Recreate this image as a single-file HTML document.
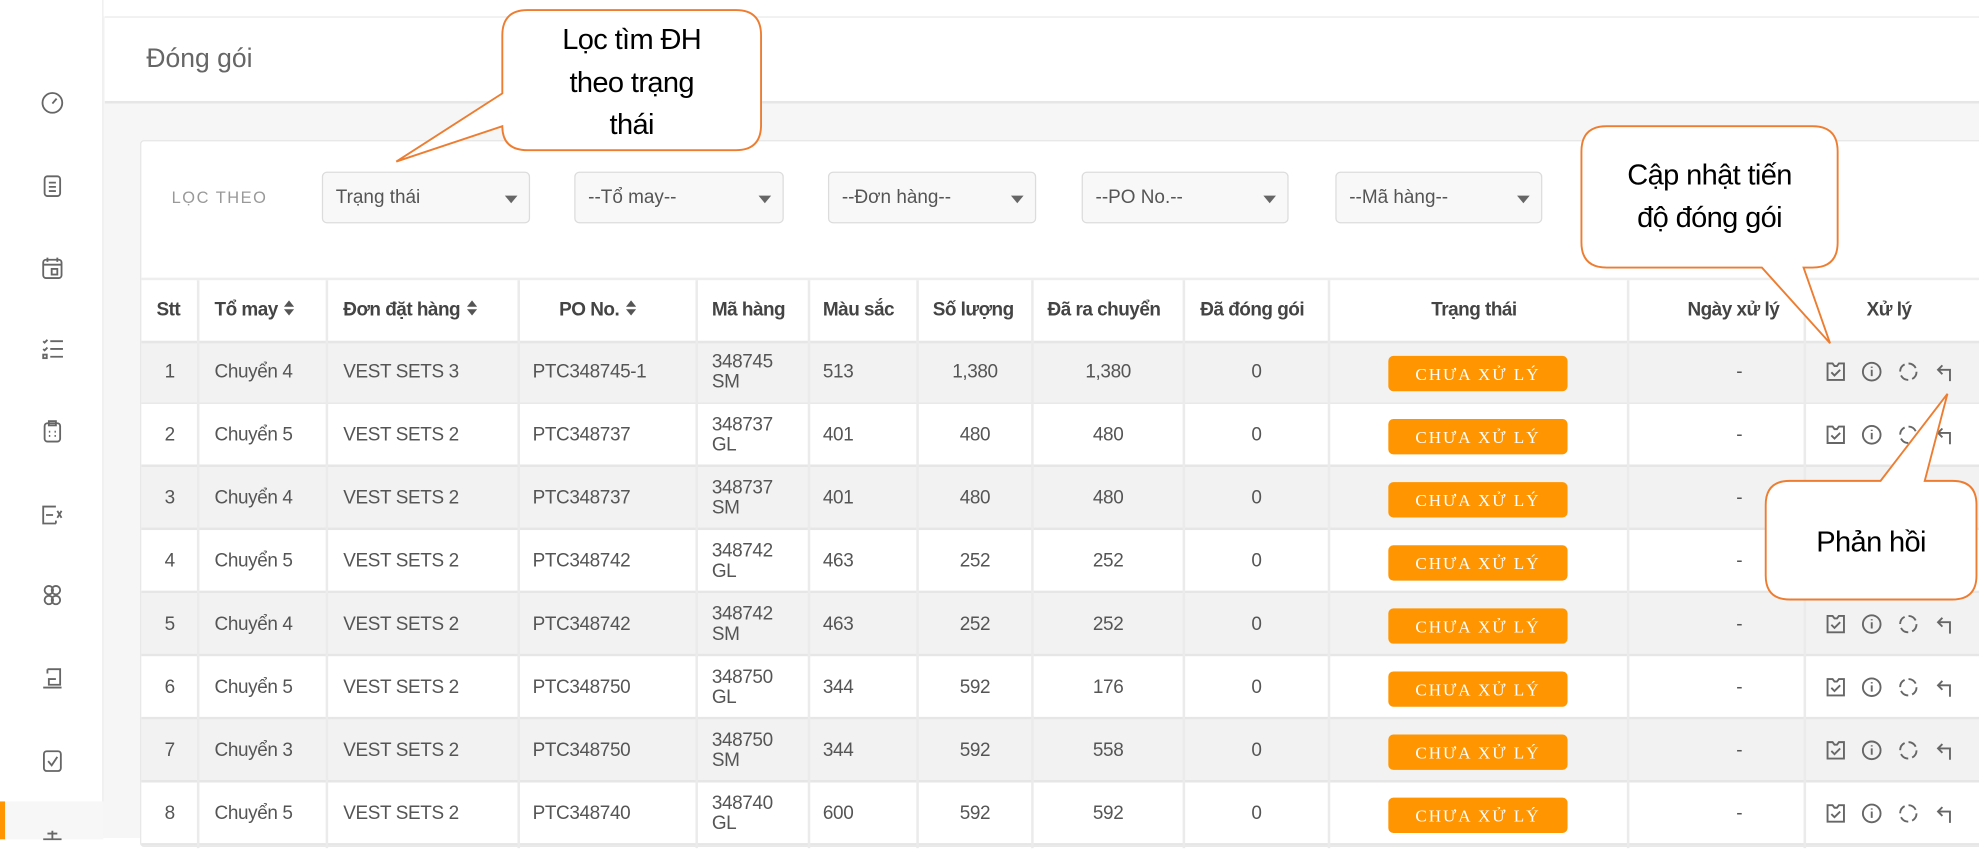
<!DOCTYPE html>
<html><head><meta charset="utf-8">
<style>
*{margin:0;padding:0;box-sizing:border-box}
html,body{width:1979px;height:838px;overflow:hidden;background:#fff}
#w{position:absolute;left:0;top:0;width:1568px;height:664px;transform:scale(1.26212);transform-origin:0 0;font-family:"Liberation Sans",sans-serif;color:#555;background:#f6f6f6}
.a{position:absolute}
.side{left:0;top:0;width:82px;height:664px;background:#fff;border-right:1px solid #ececec}
.ic{position:absolute;left:32px;width:19px;height:19px}
.hdr{left:83px;top:13px;width:1485px;height:69px;background:#fff;border-top:1px solid #eaeaea;border-bottom:2px solid #e6e6e6}
.card{left:111px;top:111px;width:1470px;height:560px;background:#fff;border:1px solid #e6e6e6;border-radius:3px}
.dd{position:absolute;top:136px;height:41px;background:#f8f8f8;border:1px solid #dcdcdc;border-radius:4px;font-size:15px;line-height:39px;padding-left:10px;color:#555}
.dd:after{content:"";position:absolute;right:9px;top:18px;border-left:5px solid transparent;border-right:5px solid transparent;border-top:6px solid #666}
.th{position:absolute;top:222px;height:47px;line-height:47px;font-size:15px;font-weight:bold;color:#444;letter-spacing:-0.4px}
.row{position:absolute;left:112px;width:1460px;height:50px;border-bottom:2px solid #e6e6e6}
.vl{position:absolute;top:222px;width:2px;height:450px;background:#ebebeb}
.c{position:absolute;font-size:15px;color:#555;line-height:50px;letter-spacing:-0.3px}
.m{line-height:16px;padding-top:9px}
.btn{position:absolute;width:142px;height:28px;background:#ff9500;border-radius:4px;color:#fff;font-family:"Liberation Serif","DejaVu Serif",serif;font-size:13.5px;letter-spacing:1.6px;text-align:center;line-height:29px}
.sort{display:inline-block;width:9px;height:13px;vertical-align:-1px;margin-left:5px;position:relative}
.sort:before{content:"";position:absolute;left:0;top:0;border-left:4.5px solid transparent;border-right:4.5px solid transparent;border-bottom:5px solid #555}
.sort:after{content:"";position:absolute;left:0;top:7px;border-left:4.5px solid transparent;border-right:4.5px solid transparent;border-top:5px solid #555}
.co{font-family:"Liberation Sans",sans-serif;font-size:23px;color:#000;text-align:center;line-height:33.5px;letter-spacing:-0.5px}
</style></head><body><div id="w">
<div class="a" style="left:82px;top:0;width:1486px;height:13px;background:#fff"></div>
<div class="a side">
<svg class="ic" style="top:72px" viewBox="0 0 17 17" fill="none" stroke="#666" stroke-width="1.3"><circle cx="8.5" cy="8.5" r="7"/><path d="M8.5 9 L11.5 5.5"/></svg>
<svg class="ic" style="top:138px" viewBox="0 0 17 17" fill="none" stroke="#666" stroke-width="1.3"><rect x="3" y="1.5" width="11" height="14" rx="2"/><path d="M6 6h5M6 9h5M6 12h5"/></svg>
<svg class="ic" style="top:203px" viewBox="0 0 17 17" fill="none" stroke="#666" stroke-width="1.3"><rect x="2" y="2.5" width="13" height="13" rx="2"/><path d="M2 6h13M5 1v3M12 1v3"/><rect x="8" y="9" width="4" height="4"/></svg>
<svg class="ic" style="top:267px" viewBox="0 0 17 17" fill="none" stroke="#666" stroke-width="1.3"><path d="M7 3h9M7 8.5h9M7 14h9M2 3l1 1 2-2M2 8.5l1 1 2-2"/><rect x="2" y="12.5" width="2.5" height="2.5"/></svg>
<svg class="ic" style="top:332px" viewBox="0 0 17 17" fill="none" stroke="#666" stroke-width="1.3"><rect x="3" y="3" width="11" height="13" rx="2"/><rect x="6" y="1.5" width="5" height="3"/><path d="M6 9h1M10 9h1M6 12h1M10 12h1"/></svg>
<svg class="ic" style="top:398px" viewBox="0 0 17 17" fill="none" stroke="#666" stroke-width="1.3"><path d="M11 3H2v12h9M11 13v2"/><path d="M4 9h5M12 6l3 5M15 6l-3 5"/></svg>
<svg class="ic" style="top:462px" viewBox="0 0 17 17" fill="none" stroke="#666" stroke-width="1.3"><circle cx="6" cy="5" r="3"/><circle cx="11" cy="5" r="3"/><circle cx="6" cy="12" r="3"/><circle cx="11" cy="12" r="3"/></svg>
<svg class="ic" style="top:528px" viewBox="0 0 17 17" fill="none" stroke="#666" stroke-width="1.3"><path d="M5 2h9v11H6V9h5M2 15h13M5 2v3"/></svg>
<svg class="ic" style="top:593px" viewBox="0 0 17 17" fill="none" stroke="#666" stroke-width="1.3"><rect x="2.5" y="2" width="12" height="14" rx="2"/><path d="M5.5 9l2.5 3 4-6"/></svg>
<div class="a" style="left:0;top:635px;width:82px;height:30px;background:#f7f7f7"></div>
<div class="a" style="left:0;top:635px;width:4px;height:30px;background:#ff9500"></div>
<svg class="ic" style="top:656px" viewBox="0 0 17 17" fill="none" stroke="#666" stroke-width="1.3"><path d="M2 8h13M8.5 2v6M5 4l7 0"/></svg>
</div>
<div class="a hdr"><div class="a" style="left:33px;top:21px;font-size:21px;color:#666">Đóng gói</div></div>
<div class="a card"></div>
<div class="a" style="left:136px;top:149px;font-size:13px;color:#999;letter-spacing:1.2px">LỌC THEO</div>
<div class="dd" style="left:255px;width:165px">Trạng thái</div>
<div class="dd" style="left:455px;width:166px">--Tổ may--</div>
<div class="dd" style="left:656px;width:165px">--Đơn hàng--</div>
<div class="dd" style="left:857px;width:164px">--PO No.--</div>
<div class="dd" style="left:1058px;width:164px">--Mã hàng--</div>
<div class="a" style="left:112px;top:220px;width:1460px;height:2px;background:#eee"></div>

<div class="row" style="top:270px;background:#f2f2f2;border-top:2px solid #e6e6e6;height:51px"></div>
<div class="row" style="top:320px;background:#fff"></div>
<div class="row" style="top:370px;background:#f2f2f2"></div>
<div class="row" style="top:420px;background:#fff"></div>
<div class="row" style="top:470px;background:#f2f2f2"></div>
<div class="row" style="top:520px;background:#fff"></div>
<div class="row" style="top:570px;background:#f2f2f2"></div>
<div class="row" style="top:620px;background:#fff"></div>

<div class="vl" style="left:156px"></div><div class="vl" style="left:258px"></div><div class="vl" style="left:410px"></div><div class="vl" style="left:551px"></div><div class="vl" style="left:640px"></div><div class="vl" style="left:726px"></div><div class="vl" style="left:817px"></div><div class="vl" style="left:937px"></div><div class="vl" style="left:1052px"></div><div class="vl" style="left:1289px"></div><div class="vl" style="left:1429px"></div>

<div class="th" style="left:124px">Stt</div>
<div class="th" style="left:170px">Tổ may<span class="sort"></span></div>
<div class="th" style="left:272px">Đơn đặt hàng<span class="sort"></span></div>
<div class="th" style="left:443px">PO No.<span class="sort"></span></div>
<div class="th" style="left:564px">Mã hàng</div>
<div class="th" style="left:652px">Màu sắc</div>
<div class="th" style="left:739px">Số lượng</div>
<div class="th" style="left:830px">Đã ra chuyển</div>
<div class="th" style="left:951px">Đã đóng gói</div>
<div class="th" style="left:1134px">Trạng thái</div>
<div class="th" style="left:1337px">Ngày xử lý</div>
<div class="th" style="left:1479px">Xử lý</div>

<svg class="a" style="left:0;top:0" width="0" height="0"><defs>
<g id="acts" fill="none" stroke="#666" stroke-width="1.5">
<path d="M2 2h4l1.5 2h2L11 2h4v13H2z"/><path d="M5 9l2.5 2.5L12 7"/>
<circle cx="37" cy="8.5" r="7"/><path d="M37 7v5M37 4.5v1"/>
<circle cx="66" cy="8.5" r="6.5" stroke-dasharray="7 3.2"/>
<path d="M99 16V7h-9M93 3.5L89.5 7 93 10.5"/>
</g></defs></svg>

<div id="rows"></div>
<script>
var d=[["1","Chuyển 4","VEST SETS 3","PTC348745-1","348745","SM","513","1,380","1,380"],
["2","Chuyển 5","VEST SETS 2","PTC348737","348737","GL","401","480","480"],
["3","Chuyển 4","VEST SETS 2","PTC348737","348737","SM","401","480","480"],
["4","Chuyển 5","VEST SETS 2","PTC348742","348742","GL","463","252","252"],
["5","Chuyển 4","VEST SETS 2","PTC348742","348742","SM","463","252","252"],
["6","Chuyển 5","VEST SETS 2","PTC348750","348750","GL","344","592","176"],
["7","Chuyển 3","VEST SETS 2","PTC348750","348750","SM","344","592","558"],
["8","Chuyển 5","VEST SETS 2","PTC348740","348740","GL","600","592","592"]];
var h="";
d.forEach(function(r,i){var t=270+i*50;
function c(x,s,w,al){return '<div class="c" style="top:'+t+'px;left:'+x+'px;'+(w?'width:'+w+'px;text-align:center;':'')+'">'+s+'</div>';}
h+=c(112,r[0],45)+c(170,r[1])+c(272,r[2])+c(422,r[3]);
h+='<div class="c m" style="top:'+t+'px;left:564px">'+r[4]+'<br>'+r[5]+'</div>';
h+=c(652,r[6])+c(727,r[7],91)+c(818,r[8],120)+c(938,"0",115)+c(1290,"-",176);
h+='<div class="btn" style="left:1100px;top:'+(t+12)+'px">CHƯA XỬ LÝ</div>';
h+='<svg class="a" style="left:1446px;top:'+(t+16)+'px" width="105" height="18"><use href="#acts"/></svg>';});
document.getElementById("rows").innerHTML=h;
</script>

<svg class="a" style="left:0;top:0" width="1568" height="664">
<path d="M418 8 H583 Q603 8 603 28 V99 Q603 119 583 119 H418 Q398 119 398 100 L314 128 L398 74 V28 Q398 8 418 8Z" fill="#fff" stroke="#ed7d31" stroke-width="1.5"/>
<path d="M1273 100 H1436 Q1456 100 1456 120 V192 Q1456 212 1436 212 H1429 L1450 272 L1396 212 H1273 Q1253 212 1253 192 V120 Q1253 100 1273 100Z" fill="#fff" stroke="#ed7d31" stroke-width="1.5"/>
<path d="M1418 381 H1490 L1543 312 L1525 381 H1547 Q1566 381 1566 400 V456 Q1566 475 1547 475 H1418 Q1399 475 1399 456 V400 Q1399 381 1418 381Z" fill="#fff" stroke="#ed7d31" stroke-width="1.5"/>
</svg>
<div class="a co" style="left:398px;top:15px;width:205px">Lọc tìm ĐH<br>theo trạng<br>thái</div>
<div class="a co" style="left:1253px;top:122px;width:203px">Cập nhật tiến<br>độ đóng gói</div>
<div class="a co" style="left:1399px;top:413px;width:167px">Phản hồi</div>
</div></body></html>
